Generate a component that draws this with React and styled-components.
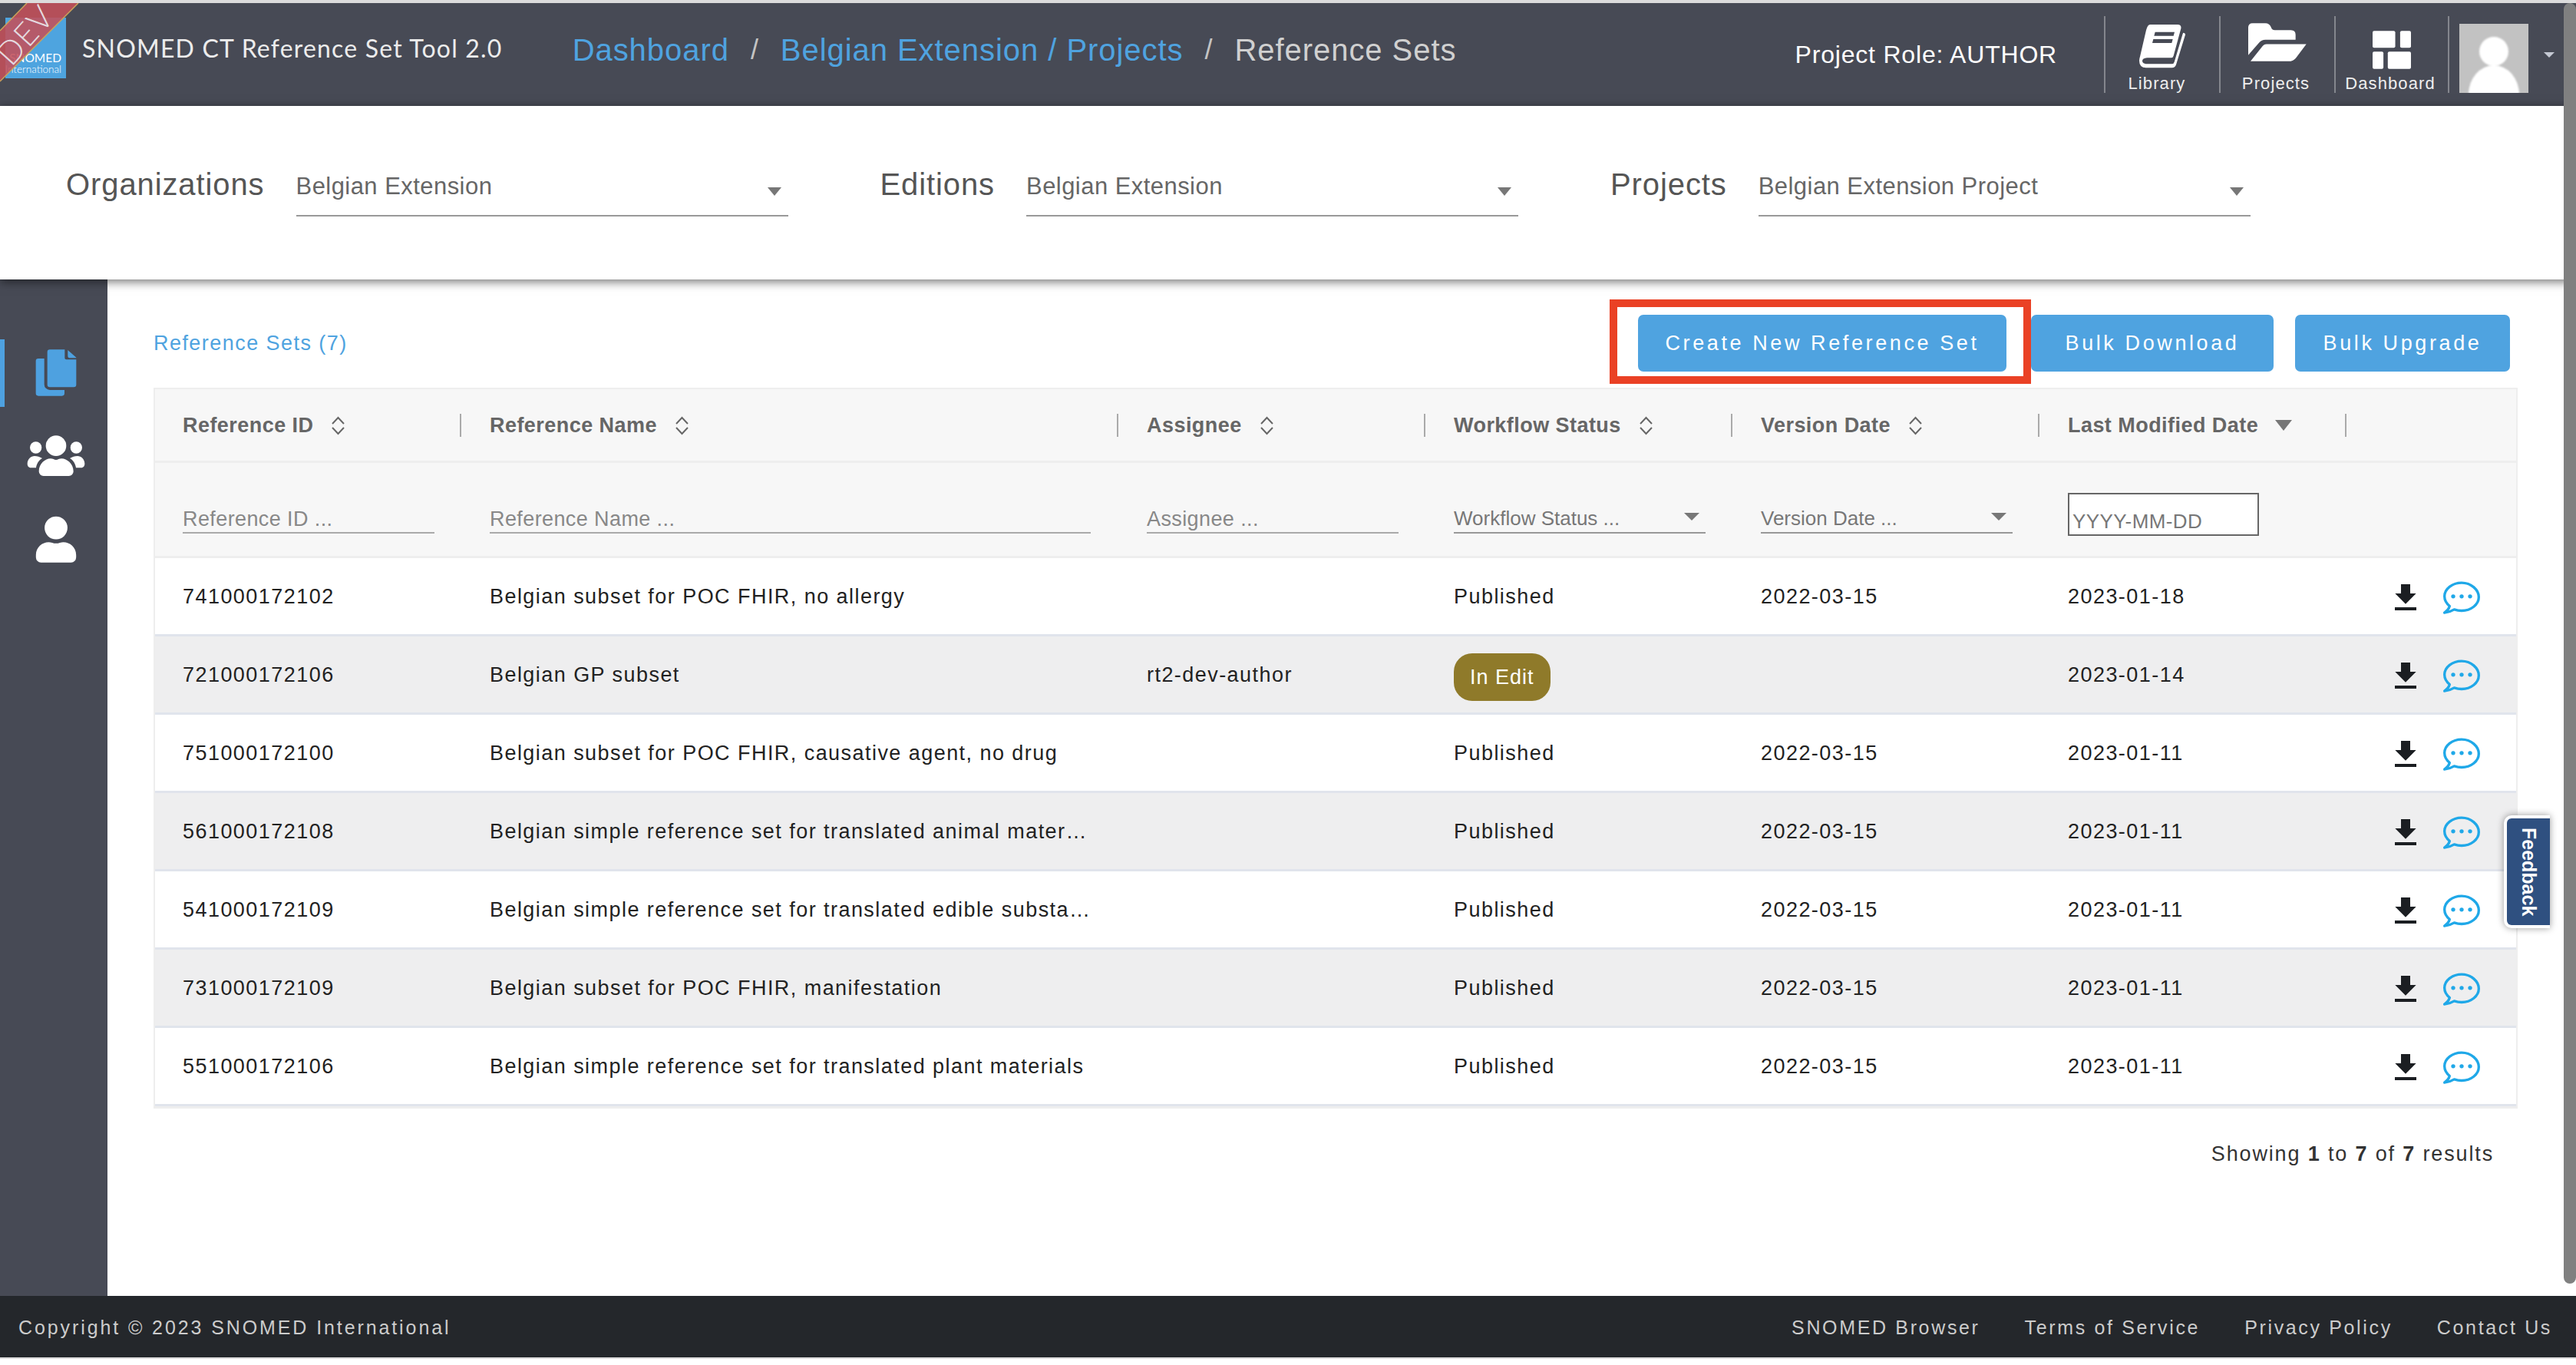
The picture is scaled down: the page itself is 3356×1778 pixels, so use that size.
import React from "react";
import styled, { createGlobalStyle } from "styled-components";

const GlobalStyle = createGlobalStyle`
  html, body {
    margin: 0;
    padding: 0;
    background: #fff;
  }
  * {
    box-sizing: border-box;
  }
  body {
    font-family: "Liberation Sans", Arial, sans-serif;
    font-size: 27px;
    letter-spacing: 1.45px;
    color: #222;
  }
`;

const Page = styled.div`
  position: relative;
  width: 3356px;
  height: 1778px;
  overflow: hidden;
  display: flex;
  flex-direction: column;
  background: #fff;
  border-top: 4px solid #dcdcdc;
`;

/* ---------- header ---------- */

const Header = styled.header`
  position: relative;
  flex: none;
  height: 134px;
  display: flex;
  align-items: center;
  padding: 0 28px 0 7px;
  background: #474a55;
  overflow: hidden;
`;

const Brand = styled.div`
  display: flex;
  align-items: center;
  margin-bottom: 18px;
`;

const Logo = styled.div`
  width: 79px;
  height: 79px;
  display: flex;
  flex-direction: column;
  align-items: flex-end;
  justify-content: flex-end;
  padding: 0 6px 5px 0;
  background: #4ea4df;
  color: #fff;
  font-family: Lato, sans-serif;
  letter-spacing: 0;
`;

const LogoName = styled.span`
  font-size: 15.5px;
  line-height: 16px;
`;

const LogoSub = styled.span`
  font-size: 13.5px;
  line-height: 14px;
  font-weight: 300;
`;

const Ribbon = styled.svg`
  position: absolute;
  top: 0;
  left: 0;
  width: 104px;
  height: 104px;
`;

const RibbonText = styled.span`
  position: absolute;
  top: 41px;
  left: 32px;
  transform: translate(-50%, -50%) rotate(-48deg);
  font-family: Lato, sans-serif;
  font-weight: 300;
  font-size: 42px;
  line-height: 42px;
  letter-spacing: 1px;
  color: rgba(236, 236, 240, 0.9);
`;

const AppTitle = styled.div`
  margin-left: 21px;
  font-family: Lato, sans-serif;
  font-size: 32px;
  letter-spacing: 1.2px;
  color: #ececec;
  white-space: nowrap;
`;

const Crumbs = styled.nav`
  display: flex;
  align-items: center;
  margin: 0 0 12px 91px;
  font-size: 40px;
  letter-spacing: 0.95px;
  white-space: nowrap;
`;

const CrumbLink = styled.span`
  color: ${(p) => (p.$current ? "#d0d0d0" : "#4fa3e0")};
  font-weight: 400;
`;

const CrumbSep = styled.span`
  margin: 0 28px;
  color: #c4c4c4;
  font-size: 36px;
`;

const HeaderRight = styled.div`
  margin-left: auto;
  display: flex;
  align-items: center;
`;

const ProjectRole = styled.div`
  margin-right: 61px;
  font-size: 32px;
  letter-spacing: 0.8px;
  color: #fff;
  white-space: nowrap;
`;

const NavCell = styled.div`
  width: 150px;
  height: 100px;
  display: flex;
  flex-direction: column;
  align-items: center;
  border-left: 2px solid #84868d;
  &:last-of-type {
    border-right: 2px solid #84868d;
  }
`;

const NavSlot = styled.div`
  height: 76px;
  padding-top: ${(p) => p.$top}px;
`;

const NavLabel = styled.div`
  margin-right: ${(p) => p.$nudge || 0}px;
  font-size: 22px;
  line-height: 24px;
  letter-spacing: 1.1px;
  color: #eee;
`;

const Avatar = styled.svg`
  width: 90px;
  height: 90px;
  margin-left: 13px;
  margin-top: 10px;
`;

const AvatarCaret = styled.span`
  margin-left: 20px;
  width: 0;
  height: 0;
  border-left: 7px solid transparent;
  border-right: 7px solid transparent;
  border-top: 7px solid #c5c9d3;
`;

/* ---------- organisation filters ---------- */

const FilterBar = styled.section`
  position: relative;
  z-index: 2;
  flex: none;
  height: 226px;
  display: flex;
  align-items: flex-start;
  padding: 76px 0 0 86px;
  background: #fff;
  box-shadow: 0 3px 12px rgba(0, 0, 0, 0.55);
`;

const BarLabel = styled.label`
  margin-right: 41px;
  font-size: 40px;
  line-height: 52px;
  letter-spacing: 0.9px;
  color: #555;
`;

const BarSelect = styled.div`
  width: 641px;
  height: 68px;
  margin-right: 120px;
  display: flex;
  justify-content: space-between;
  border-bottom: 2px solid #999;
  font-size: 31px;
  line-height: 58px;
  letter-spacing: 0.45px;
  color: #666;
`;

const Caret = styled.span`
  flex: none;
  width: 0;
  height: 0;
  margin: ${(p) => p.$top || 0}px ${(p) => p.$right || 0}px 0 ${(p) => p.$left || 0}px;
  border-left: ${(p) => p.$size / 2}px solid transparent;
  border-right: ${(p) => p.$size / 2}px solid transparent;
  border-top: ${(p) => p.$high}px solid ${(p) => p.$color || "#777"};
`;

/* ---------- body ---------- */

const Body = styled.div`
  flex: 1;
  min-height: 0;
  display: flex;
`;

const Sidebar = styled.aside`
  flex: none;
  width: 140px;
  display: flex;
  flex-direction: column;
  gap: 20px;
  padding-top: 78px;
  background: #474a55;
`;

const SideItem = styled.div`
  height: 88px;
  display: flex;
  align-items: center;
  justify-content: center;
  border-left: 6px solid ${(p) => (p.$active ? "#4ea1e0" : "transparent")};
`;

const Main = styled.main`
  flex: 1;
  min-width: 0;
  padding: 46px 76px 0 60px;
`;

const Toolbar = styled.div`
  height: 74px;
  display: flex;
  align-items: center;
  margin-bottom: 21px;
  padding-right: 10px;
`;

const ToolbarTitle = styled.div`
  color: #4fa3e0;
  margin-right: auto;
`;

const Marked = styled.div`
  position: relative;
  margin-right: 32px;
  &::after {
    content: "";
    position: absolute;
    top: -20px;
    bottom: -16px;
    left: -37px;
    right: -32px;
    border: 10px solid #ea4125;
    pointer-events: none;
  }
`;

const Button = styled.button`
  display: block;
  width: ${(p) => p.$width}px;
  height: 74px;
  margin-left: ${(p) => p.$left || 0}px;
  padding: 0;
  border: 0;
  border-radius: 7px;
  background: #4fa3e0;
  color: #fff;
  font-family: inherit;
  font-size: 27px;
  letter-spacing: 3.6px;
`;

/* ---------- table ---------- */

const Table = styled.div`
  border: 2px solid #eee;
  border-bottom-width: 3px;
`;

const Grid = styled.div`
  display: grid;
  grid-template-columns: 399px 856px 400px 400px 400px 400px 1fr;
  & > *:first-child {
    padding-left: 36px;
  }
`;

const HeadRow = styled(Grid)`
  height: 96px;
  padding-top: 1px;
  background: #f7f7f7;
  border-bottom: 3px solid #eee;
`;

const HeadCell = styled.div`
  display: flex;
  align-items: center;
  padding-left: 37px;
  font-weight: 700;
  letter-spacing: 0.45px;
  color: #666;
  white-space: nowrap;
`;

const SortIcon = styled.svg`
  width: 19px;
  height: 25px;
  margin-left: 23px;
`;

const ColDivider = styled.span`
  width: 2px;
  height: 30px;
  margin-left: auto;
  background: #aaa;
`;

const FilterRow = styled(Grid)`
  height: 124px;
  background: #f7f7f7;
  border-bottom: 3px solid #eee;
`;

const FilterCell = styled.div`
  display: flex;
  align-items: flex-end;
  padding: 0 0 ${(p) => p.$bottom || 29}px 37px;
`;

const FilterInput = styled.input`
  width: ${(p) => p.$width || 328}px;
  height: 46px;
  padding: 10px 0 0;
  border: 0;
  border-bottom: 2px solid #aaa;
  outline: 0;
  background: transparent;
  font-family: inherit;
  font-size: 27px;
  letter-spacing: 0.4px;
  &::placeholder {
    color: #888;
    opacity: 1;
  }
`;

const FilterSelect = styled.div`
  width: 328px;
  height: 46px;
  display: flex;
  justify-content: space-between;
  border-bottom: 2px solid #999;
  color: #777;
  font-size: 26px;
  letter-spacing: 0;
  line-height: 52px;
`;

const DateInput = styled.input`
  width: 249px;
  height: 56px;
  padding: 18px 0 0 4px;
  border: 2px solid #666;
  outline: 0;
  background: #fff;
  font-family: inherit;
  font-size: 26px;
  letter-spacing: 0.4px;
  &::placeholder {
    color: #777;
    opacity: 1;
  }
`;

const Row = styled(Grid)`
  height: 102px;
  background: ${(p) => (p.$alt ? "#eeeeef" : "#fff")};
  border-bottom: 3px solid #e0e4ec;
`;

const Cell = styled.div`
  display: flex;
  align-items: center;
  min-width: 0;
  padding: 1px 0 0 37px;
  white-space: nowrap;
`;

const Truncate = styled.span`
  width: 784px;
  overflow: hidden;
  text-overflow: ellipsis;
`;

const Badge = styled.span`
  height: 62px;
  margin-top: 6px;
  padding: 0 21px;
  display: flex;
  align-items: center;
  border-radius: 24px;
  background: #8f7a2a;
  color: #fff;
  font-size: 27px;
  letter-spacing: 1px;
`;

const Actions = styled(Cell)`
  gap: 34px;
  padding: 3px 0 0 63px;
`;

const Results = styled.div`
  margin-top: 42px;
  padding-right: 31px;
  text-align: right;
  font-size: 27px;
  line-height: 34px;
  letter-spacing: 1.85px;
  color: #333;
`;

/* ---------- footer ---------- */

const Footer = styled.footer`
  flex: none;
  height: 80px;
  display: flex;
  align-items: center;
  justify-content: space-between;
  padding: 2px 31px 0 24px;
  margin-bottom: 10px;
  background: #24272b;
  color: #ccc;
  font-size: 25px;
  letter-spacing: 2.9px;
  box-shadow: 0 2px 0 #dcdcdc;
`;

const FooterLinks = styled.div`
  display: flex;
  gap: 58px;
  letter-spacing: 2.65px;
`;

/* ---------- floating bits ---------- */

const ScrollThumb = styled.div`
  position: absolute;
  top: 0;
  right: 0;
  z-index: 3;
  width: 16px;
  height: 1668px;
  border-radius: 8px;
  background: #808080;
`;

const Feedback = styled.div`
  position: absolute;
  top: 1058px;
  right: 34px;
  z-index: 4;
  width: 60px;
  height: 147px;
  display: flex;
  align-items: center;
  justify-content: center;
  border: 4px solid #fff;
  border-right: 0;
  border-radius: 10px 0 0 10px;
  background: #2f5080;
  box-shadow: 0 0 10px rgba(0, 0, 0, 0.4);
  color: #fff;
  font-size: 25px;
  font-weight: 700;
  letter-spacing: 0;
  writing-mode: vertical-rl;
`;

/* ---------- drawings ---------- */

const BookIcon = () => (
  <svg width="62" height="58" viewBox="135 45 186 174">
    <path
      fill="#fff"
      d="M180 48H288q16 0 13 16L272 170q-2 8-10 8H170q-20 1-20 12q0 12 18 12H265q8 0 10-8L308 84l2-4q8 0 8 8L282 205q-4 12-16 12H165q-27 0-27-28q0-8 3-16L165 70q6-22 15-22Z"
    />
    <path fill="#474a55" d="M200 77H276L272 92H196ZM193 105H269L265 120H189Z" />
  </svg>
);

const FolderIcon = () => (
  <svg width="78" height="52" viewBox="555 42 234 155">
    <path
      fill="#fff"
      d="M575 45H625q15 0 22 15q3 12 15 12H725q18 0 18 18V110H625q-15 0-25 12L558 170V62q0-17 17-17Z"
    />
    <path
      fill="#fff"
      d="M630 127H785L745 180q-10 14-30 14H567L610 140q8-13 20-13Z"
    />
  </svg>
);

const GridIcon = () => (
  <svg width="50" height="50" viewBox="1048 76 149 148" fill="#fff">
    <rect x="1048" y="76" width="88" height="66" rx="6" />
    <rect x="1155" y="76" width="42" height="66" rx="6" />
    <rect x="1048" y="157" width="42" height="67" rx="6" />
    <rect x="1107" y="157" width="90" height="67" rx="6" />
  </svg>
);

const DocsIcon = () => (
  <svg width="54" height="62" viewBox="78 44 162 186" fill="#4ea1e0">
    <path d="M135 45H193V78a6 6 0 0 0 6 6H238V182a10 10 0 0 1-10 10H135a10 10 0 0 1-10-10V55a10 10 0 0 1 10-10Z" />
    <path d="M205 47L238 76V78H212a7 7 0 0 1-7-7Z" />
    <path d="M113 80V181a22 22 0 0 0 22 22H192V216a10 10 0 0 1-10 10H90a10 10 0 0 1-10-10V90a10 10 0 0 1 10-10Z" />
  </svg>
);

const UsersIcon = () => (
  <svg width="76" height="54" viewBox="46 379 228 162" fill="#fff">
    <circle cx="160" cy="420" r="40" />
    <circle cx="81" cy="427" r="23" />
    <circle cx="239" cy="427" r="23" />
    <path d="M93 520c0-30 25-50 45-50c10 0 15 5 22 5s12-5 22-5c20 0 46 20 46 50a18 18 0 0 1-18 18H111a18 18 0 0 1-18-18Z" />
    <path d="M48 490c0-18 14-30 28-30c11 0 20 3 30 9c-14 8-22 22-24 37H62c-10 0-14-8-14-16Z" />
    <path d="M272 490c0-18-14-30-28-30c-11 0-20 3-30 9c14 8 22 22 24 37h20c10 0 14-8 14-16Z" />
  </svg>
);

const UserIcon = () => (
  <svg width="54" height="61" viewBox="78 692 162 184" fill="#fff">
    <circle cx="159" cy="739" r="45" />
    <path d="M80 845c0-30 25-50 50-50c10 0 18 5 29 5s19-5 29-5c25 0 50 20 50 50v10a20 20 0 0 1-20 20H100a20 20 0 0 1-20-20Z" />
  </svg>
);

const Sort = () => (
  <SortIcon viewBox="0 0 19 25" fill="none" stroke="#666" strokeWidth="2">
    <polyline points="2,10 9.5,2 17,10" />
    <polyline points="2,15 9.5,23 17,15" />
  </SortIcon>
);

const DownloadIcon = () => (
  <svg width="28" height="34" viewBox="660 204 84 102" fill="#1b1e22">
    <path d="M684 204H720V240H743L702 281L661 240H684Z" />
    <rect x="660" y="294" width="84" height="12" />
  </svg>
);

const ChatIcon = () => (
  <svg width="50" height="43" viewBox="843 188 150 128">
    <path
      fill="none"
      stroke="#1fa8e8"
      strokeWidth="10"
      strokeLinejoin="round"
      d="M918 194c-37 0-67 24-67 53c0 15 8 28 20 38c-2 8-8 17-20 26c14-1 28-7 38-13c9 3 19 5 29 5c37 0 67-24 67-53s-30-56-67-56Z"
    />
    <g fill="#1fa8e8">
      <circle cx="885" cy="247" r="8" />
      <circle cx="918" cy="247" r="8" />
      <circle cx="951" cy="247" r="8" />
    </g>
  </svg>
);

const columns = [
  "Reference ID",
  "Reference Name",
  "Assignee",
  "Workflow Status",
  "Version Date",
];

const rows = [
  ["741000172102", "Belgian subset for POC FHIR, no allergy", "", "Published", "2022-03-15", "2023-01-18"],
  ["721000172106", "Belgian GP subset", "rt2-dev-author", "In Edit", "", "2023-01-14"],
  ["751000172100", "Belgian subset for POC FHIR, causative agent, no drug", "", "Published", "2022-03-15", "2023-01-11"],
  ["561000172108", "Belgian simple reference set for translated animal materials", "", "Published", "2022-03-15", "2023-01-11"],
  ["541000172109", "Belgian simple reference set for translated edible substances", "", "Published", "2022-03-15", "2023-01-11"],
  ["731000172109", "Belgian subset for POC FHIR, manifestation", "", "Published", "2022-03-15", "2023-01-11"],
  ["551000172106", "Belgian simple reference set for translated plant materials", "", "Published", "2022-03-15", "2023-01-11"],
];

const barFilters = [
  ["Organizations", "Belgian Extension"],
  ["Editions", "Belgian Extension"],
  ["Projects", "Belgian Extension Project"],
];

const App = () => {
  return (
    <Page>
      <GlobalStyle />
      <Header>
        <Brand>
          <Logo>
            <LogoName>SNOMED</LogoName>
            <LogoSub>International</LogoSub>
          </Logo>
          <AppTitle>SNOMED CT Reference Set Tool 2.0</AppTitle>
        </Brand>
        <Ribbon viewBox="0 0 104 104">
          <polygon points="35,0 102,0 0,102 0,36" fill="#c4505a" fillOpacity="0.88" />
          <path d="M35 0L0 36M102 0L0 102" stroke="#c9a35a" strokeWidth="1.5" />
        </Ribbon>
        <RibbonText>DEV</RibbonText>
        <Crumbs>
          <CrumbLink>Dashboard</CrumbLink>
          <CrumbSep>/</CrumbSep>
          <CrumbLink>Belgian Extension / Projects</CrumbLink>
          <CrumbSep>/</CrumbSep>
          <CrumbLink $current>Reference Sets</CrumbLink>
        </Crumbs>
        <HeaderRight>
          <ProjectRole>Project Role: AUTHOR</ProjectRole>
          <NavCell>
            <NavSlot $top={10}>
              <BookIcon />
            </NavSlot>
            <NavLabel $nudge={14}>Library</NavLabel>
          </NavCell>
          <NavCell>
            <NavSlot $top={8}>
              <FolderIcon />
            </NavSlot>
            <NavLabel $nudge={4}>Projects</NavLabel>
          </NavCell>
          <NavCell>
            <NavSlot $top={19}>
              <GridIcon />
            </NavSlot>
            <NavLabel $nudge={4}>Dashboard</NavLabel>
          </NavCell>
          <Avatar viewBox="0 0 90 90">
            <defs>
              <filter id="soft">
                <feGaussianBlur stdDeviation="1.2" />
              </filter>
            </defs>
            <rect width="90" height="90" fill="#c2c2c2" />
            <g fill="#fff" filter="url(#soft)">
              <circle cx="45" cy="36" r="19" />
              <ellipse cx="45" cy="92" rx="33" ry="38" />
            </g>
          </Avatar>
          <AvatarCaret />
        </HeaderRight>
      </Header>

      <FilterBar>
        {barFilters.map(([label, value]) => (
          <React.Fragment key={label}>
            <BarLabel>{label}</BarLabel>
            <BarSelect>
              {value}
              <Caret $size={19} $high={11} $top={30} $right={9} />
            </BarSelect>
          </React.Fragment>
        ))}
      </FilterBar>

      <Body>
        <Sidebar>
          <SideItem $active>
            <DocsIcon />
          </SideItem>
          <SideItem>
            <UsersIcon />
          </SideItem>
          <SideItem>
            <UserIcon />
          </SideItem>
        </Sidebar>

        <Main>
          <Toolbar>
            <ToolbarTitle>Reference Sets (7)</ToolbarTitle>
            <Marked>
              <Button $width={480}>Create New Reference Set</Button>
            </Marked>
            <Button $width={316}>Bulk Download</Button>
            <Button $width={280} $left={28}>
              Bulk Upgrade
            </Button>
          </Toolbar>

          <Table>
            <HeadRow>
              {columns.map((name) => (
                <HeadCell key={name}>
                  {name}
                  <Sort />
                  <ColDivider />
                </HeadCell>
              ))}
              <HeadCell>
                Last Modified Date
                <Caret $size={22} $high={14} $left={22} />
                <ColDivider />
              </HeadCell>
              <HeadCell />
            </HeadRow>

            <FilterRow>
              <FilterCell>
                <FilterInput placeholder="Reference ID ..." />
              </FilterCell>
              <FilterCell>
                <FilterInput $width={783} placeholder="Reference Name ..." />
              </FilterCell>
              <FilterCell>
                <FilterInput placeholder="Assignee ..." />
              </FilterCell>
              <FilterCell>
                <FilterSelect>
                  Workflow Status ...
                  <Caret $size={21} $high={10} $top={19} $right={8} />
                </FilterSelect>
              </FilterCell>
              <FilterCell>
                <FilterSelect>
                  Version Date ...
                  <Caret $size={21} $high={10} $top={19} $right={8} />
                </FilterSelect>
              </FilterCell>
              <FilterCell $bottom={26}>
                <DateInput placeholder="YYYY-MM-DD" />
              </FilterCell>
              <FilterCell />
            </FilterRow>

            {rows.map((row, i) => (
              <Row key={row[0]} $alt={i % 2 === 1}>
                <Cell>{row[0]}</Cell>
                <Cell>
                  <Truncate>{row[1]}</Truncate>
                </Cell>
                <Cell>{row[2]}</Cell>
                <Cell>{row[3] === "In Edit" ? <Badge>In Edit</Badge> : row[3]}</Cell>
                <Cell>{row[4]}</Cell>
                <Cell>{row[5]}</Cell>
                <Actions>
                  <DownloadIcon />
                  <ChatIcon />
                </Actions>
              </Row>
            ))}
          </Table>

          <Results>
            Showing <b>1</b> to <b>7</b> of <b>7</b> results
          </Results>
        </Main>
      </Body>

      <Footer>
        <span>Copyright © 2023 SNOMED International</span>
        <FooterLinks>
          <span>SNOMED Browser</span>
          <span>Terms of Service</span>
          <span>Privacy Policy</span>
          <span>Contact Us</span>
        </FooterLinks>
      </Footer>

      <ScrollThumb />
      <Feedback>Feedback</Feedback>
    </Page>
  );
};

export default App;
